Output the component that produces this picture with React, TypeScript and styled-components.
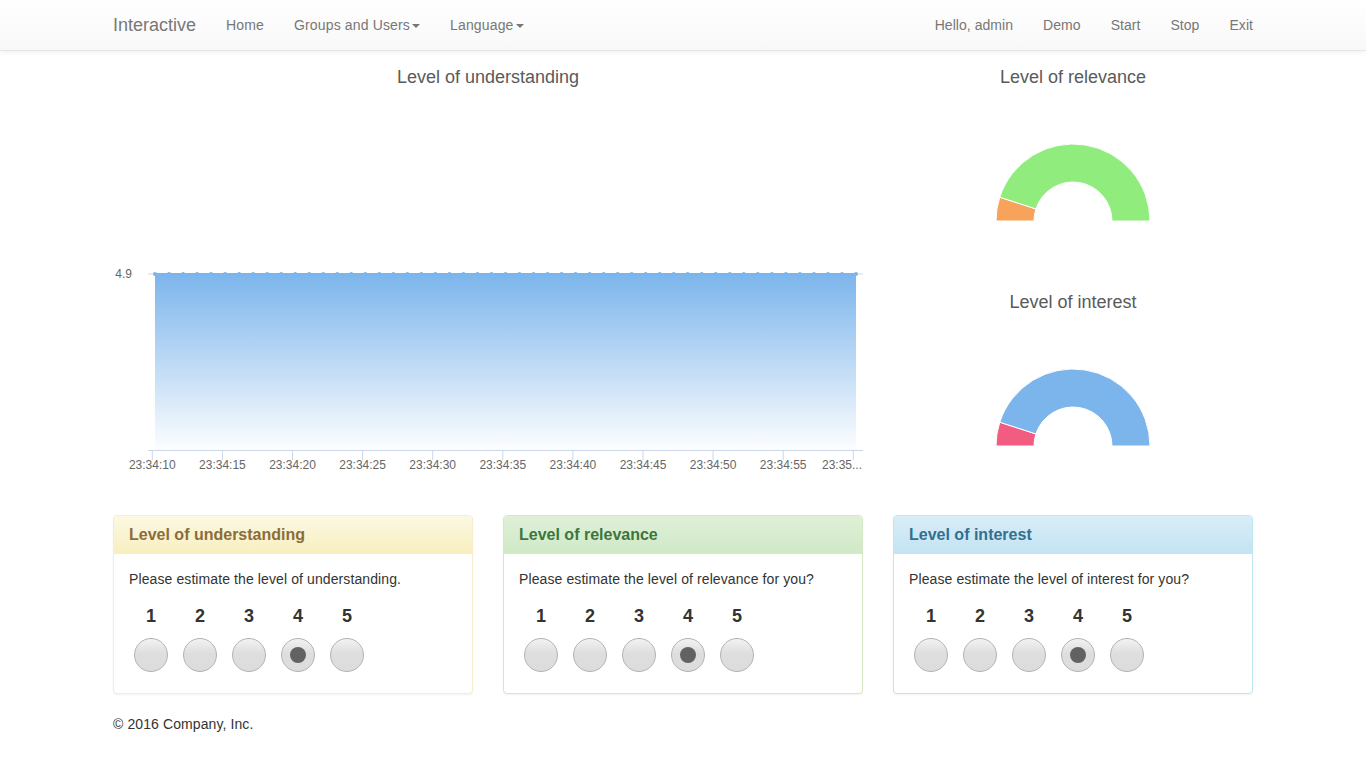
import React from 'react';
import styled, { createGlobalStyle } from 'styled-components';

const GlobalStyle = createGlobalStyle`
  html, body { margin: 0; padding: 0; background: #fff; }
  body {
    font-family: "Liberation Sans", Arial, Helvetica, sans-serif;
    font-size: 14px;
    line-height: 20px;
    color: #333;
  }
  * { box-sizing: border-box; }
`;

const Navbar = styled.nav`
  height: 51px;
  background-image: linear-gradient(to bottom, #fff 0, #f8f8f8 100%);
  border-bottom: 1px solid #e7e7e7;
  box-shadow: inset 0 1px 0 rgba(255, 255, 255, 0.15), 0 1px 5px rgba(0, 0, 0, 0.075);
`;

const Container = styled.div`
  width: 1140px;
  margin: 0 auto;
`;

const NavInner = styled(Container)`
  display: flex;
  align-items: center;
  height: 50px;
`;

const Brand = styled.a`
  margin-left: -15px;
  padding: 15px;
  font-size: 18px;
  line-height: 20px;
  color: #777;
  text-decoration: none;
  text-shadow: 0 1px 0 rgba(255, 255, 255, 0.25);
`;

const NavList = styled.ul<{ $right?: boolean }>`
  display: flex;
  list-style: none;
  margin: 0;
  padding: 0;
  ${(p) => (p.$right ? 'margin-left: auto; margin-right: -15px;' : '')}
`;

const NavLink = styled.a<{ $tight?: boolean }>`
  display: block;
  padding: 15px;
  line-height: 20px;
  font-size: 14px;
  letter-spacing: ${(p) => (p.$tight ? '0.05px' : '0.15px')};
  color: #777;
  text-decoration: none;
  text-shadow: 0 1px 0 rgba(255, 255, 255, 0.25);
`;

const Caret = styled.span`
  display: inline-block;
  width: 0;
  height: 0;
  margin-left: 2px;
  vertical-align: middle;
  border-top: 4px solid #777;
  border-right: 4px solid transparent;
  border-left: 4px solid transparent;
`;

const ChartsRow = styled.div`
  display: grid;
  grid-template-columns: 750px 360px;
  column-gap: 30px;
  height: 464px;
`;

const ChartTitle = styled.div`
  padding-top: 15px;
  font-size: 18px;
  line-height: 22px;
  text-align: center;
  color: #5a5a5a;
`;

const ChartSvg = styled.svg`
  display: block;
  font-family: "Liberation Sans", Arial, sans-serif;
`;

const GaugeColumn = styled.div`
  display: flex;
  flex-direction: column;
`;

const GaugeBlock = styled.div`
  height: 225px;
`;

const PanelsRow = styled.div`
  display: grid;
  grid-template-columns: repeat(3, 360px);
  column-gap: 30px;
`;

type Variant = 'warning' | 'success' | 'info';

const variants: Record<Variant, { from: string; to: string; text: string; border: string }> = {
  warning: { from: '#fcf8e3', to: '#f8efc0', text: '#8a6d3b', border: '#faebcc' },
  success: { from: '#dff0d8', to: '#d0e9c6', text: '#3c763d', border: '#d6e9c6' },
  info: { from: '#d9edf7', to: '#c4e3f3', text: '#31708f', border: '#bce8f1' },
};

const Panel = styled.div<{ $v: Variant }>`
  margin-bottom: 20px;
  background: #fff;
  border: 1px solid ${(p) => variants[p.$v].border};
  border-radius: 4px;
  box-shadow: 0 1px 2px rgba(0, 0, 0, 0.05);
  overflow: hidden;
`;

const PanelHeading = styled.div<{ $v: Variant }>`
  padding: 10px 15px;
  background-image: linear-gradient(
    to bottom,
    ${(p) => variants[p.$v].from} 0,
    ${(p) => variants[p.$v].to} 100%
  );
  border-bottom: 1px solid ${(p) => variants[p.$v].border};
  color: ${(p) => variants[p.$v].text};
`;

const PanelTitle = styled.h3`
  margin: 0;
  font-size: 16px;
  line-height: 17px;
  font-weight: bold;
`;

const PanelBody = styled.div`
  padding: 15px;
`;

const Question = styled.p`
  margin: 0 0 10px;
  letter-spacing: 0.1px;
`;

const Options = styled.div`
  display: flex;
  gap: 15px;
  padding: 5px 0 6px 5px;
`;

const Option = styled.label`
  display: flex;
  flex-direction: column;
  align-items: center;
  width: 34px;
`;

const OptionNumber = styled.span`
  font-size: 18px;
  font-weight: bold;
  line-height: 25px;
  margin-bottom: 9px;
  color: #333;
`;

const Radio = styled.span<{ $checked?: boolean }>`
  display: flex;
  align-items: center;
  justify-content: center;
  width: 34px;
  height: 34px;
  border-radius: 50%;
  border: 1px solid #b3b3b3;
  background-image: linear-gradient(to bottom, #f2f2f2 0, #dedede 45%, #dcdcdc 100%);
  &::after {
    content: '';
    display: ${(p) => (p.$checked ? 'block' : 'none')};
    width: 16px;
    height: 16px;
    border-radius: 50%;
    background: #626262;
  }
`;

const Footer = styled.footer`
  line-height: 20px;
  letter-spacing: 0.1px;
  color: #333;
`;

const AREA = '#7cb5ec';

function LineChart() {
  const labels = ['23:34:10', '23:34:15', '23:34:20', '23:34:25', '23:34:30', '23:34:35', '23:34:40', '23:34:45', '23:34:50', '23:34:55'];
  const ticks = Array.from({ length: 11 }, (_, i) => 39.3 + 70.1 * i);
  const pts = Array.from({ length: 51 }, (_, i) => 42 + 14.02 * i);
  const top = 186;
  const bottom = 362;
  return (
    <ChartSvg width={750} height={427} viewBox="0 0 750 427">
      <defs>
        <linearGradient id="areaGrad" x1="0" y1="0" x2="0" y2="1">
          <stop offset="0" stopColor={AREA} stopOpacity={1} />
          <stop offset="1" stopColor={AREA} stopOpacity={0.02} />
        </linearGradient>
      </defs>
      <line x1={35} y1={top} x2={750} y2={top} stroke="#d8d8d8" strokeWidth={1} />
      <rect x={42} y={top} width={701} height={bottom - top} fill="url(#areaGrad)" />
      <line x1={42} y1={top} x2={743} y2={top} stroke={AREA} strokeWidth={2} />
      {pts.map((x, i) => (
        <circle key={i} cx={x} cy={top} r={2} fill={AREA} />
      ))}
      <line x1={35} y1={bottom + 0.5} x2={750} y2={bottom + 0.5} stroke="#ccd6eb" strokeWidth={1} />
      {ticks.map((x, i) => (
        <line key={i} x1={x} y1={bottom} x2={x} y2={bottom + 10} stroke="#ccd6eb" strokeWidth={1} />
      ))}
      <text x={19} y={190} textAnchor="end" fontSize={12} fill="#666">4.9</text>
      {labels.map((l, i) => (
        <text key={l} x={ticks[i]} y={381} textAnchor="middle" fontSize={12} fill="#666">{l}</text>
      ))}
      <text x={749} y={381} textAnchor="end" fontSize={12} fill="#666">23:35...</text>
    </ChartSvg>
  );
}

function arcPath(cx: number, cy: number, R: number, r: number, a0: number, a1: number) {
  const rad = (d: number) => (d * Math.PI) / 180;
  const pt = (rr: number, a: number) => [cx - rr * Math.cos(rad(a)), cy - rr * Math.sin(rad(a))];
  const [ox0, oy0] = pt(R, a0);
  const [ox1, oy1] = pt(R, a1);
  const [ix1, iy1] = pt(r, a1);
  const [ix0, iy0] = pt(r, a0);
  return `M${ox0},${oy0} A${R},${R} 0 0 1 ${ox1},${oy1} L${ix1},${iy1} A${r},${r} 0 0 0 ${ix0},${iy0} Z`;
}

function Gauge({ small, big }: { small: string; big: string }) {
  const cx = 180;
  const cy = 133;
  return (
    <ChartSvg width={360} height={188} viewBox="0 0 360 188">
      <path d={arcPath(cx, cy, 77, 39, 0, 18)} fill={small} stroke="#fff" strokeWidth={1} />
      <path d={arcPath(cx, cy, 77, 39, 18, 180)} fill={big} stroke="#fff" strokeWidth={1} />
    </ChartSvg>
  );
}

const panels: { v: Variant; title: string; q: string }[] = [
  { v: 'warning', title: 'Level of understanding', q: 'Please estimate the level of understanding.' },
  { v: 'success', title: 'Level of relevance', q: 'Please estimate the level of relevance for you?' },
  { v: 'info', title: 'Level of interest', q: 'Please estimate the level of interest for you?' },
];

export default function App() {
  return (
    <>
      <GlobalStyle />
      <Navbar>
        <NavInner>
          <Brand href="#">Interactive</Brand>
          <NavList>
            <li><NavLink href="#">Home</NavLink></li>
            <li><NavLink href="#">Groups and Users<Caret /></NavLink></li>
            <li><NavLink href="#">Language<Caret /></NavLink></li>
          </NavList>
          <NavList $right>
            <li><NavLink $tight href="#">Hello, admin</NavLink></li>
            <li><NavLink $tight href="#">Demo</NavLink></li>
            <li><NavLink $tight href="#">Start</NavLink></li>
            <li><NavLink $tight href="#">Stop</NavLink></li>
            <li><NavLink $tight href="#">Exit</NavLink></li>
          </NavList>
        </NavInner>
      </Navbar>
      <Container>
        <ChartsRow>
          <div>
            <ChartTitle>Level of understanding</ChartTitle>
            <LineChart />
          </div>
          <GaugeColumn>
            <GaugeBlock>
              <ChartTitle>Level of relevance</ChartTitle>
              <Gauge small="#f7a35c" big="#90ed7d" />
            </GaugeBlock>
            <GaugeBlock>
              <ChartTitle>Level of interest</ChartTitle>
              <Gauge small="#f15c80" big="#7cb5ec" />
            </GaugeBlock>
          </GaugeColumn>
        </ChartsRow>
        <PanelsRow>
          {panels.map((p) => (
            <Panel key={p.v} $v={p.v}>
              <PanelHeading $v={p.v}>
                <PanelTitle>{p.title}</PanelTitle>
              </PanelHeading>
              <PanelBody>
                <Question>{p.q}</Question>
                <Options>
                  {[1, 2, 3, 4, 5].map((n) => (
                    <Option key={n}>
                      <OptionNumber>{n}</OptionNumber>
                      <Radio $checked={n === 4} />
                    </Option>
                  ))}
                </Options>
              </PanelBody>
            </Panel>
          ))}
        </PanelsRow>
        <Footer>© 2016 Company, Inc.</Footer>
      </Container>
    </>
  );
}
